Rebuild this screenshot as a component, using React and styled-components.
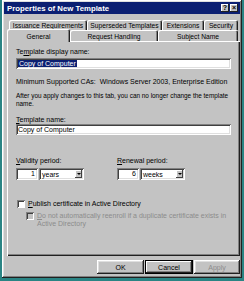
import React from 'react'
import styled, { createGlobalStyle } from 'styled-components'

const GlobalStyle = createGlobalStyle`
  html, body { margin: 0; padding: 0; background: #2a8484; }
  body {
    font-family: "Liberation Sans", Arial, sans-serif;
    font-size: 7px;
    color: #000;
  }
`

const raised = `
  box-shadow: inset -1px -1px #202020, inset 1px 1px #fff, inset -2px -2px #808080, inset 2px 2px #dfdfdf;
`
const sunken = `
  box-shadow: inset 1px 1px #808080, inset -1px -1px #fff, inset 2px 2px #404040, inset -2px -2px #dfdfdf;
`

const Desktop = styled.div`
  width: 244px;
  height: 281px;
  padding: 0 2px 3px 2px;
  box-sizing: border-box;
  overflow: hidden;
`

const Window = styled.div`
  width: 240px;
  height: 278px;
  box-sizing: border-box;
  background: #c3c3c3;
  padding: 2px;
  ${raised}
  display: flex;
  flex-direction: column;
`

const TitleBar = styled.div`
  height: 12px;
  background: #0b1f72;
  display: flex;
  align-items: center;
  justify-content: space-between;
  padding: 0 2px 0 3px;
`

const TitleText = styled.span`
  color: #fff;
  font-weight: bold;
  font-size: 7.8px;
`

const TitleButtons = styled.div`
  display: flex;
  gap: 1px;
`

const TitleButton = styled.div`
  width: 8px;
  height: 8px;
  background: #c3c3c3;
  box-shadow: inset -1px -1px #202020, inset 1px 1px #fff;
  font-weight: bold;
  font-size: 7px;
  line-height: 8px;
  text-align: center;
`

const Body = styled.div`
  padding: 6px 0 0 3px;
  display: flex;
  flex-direction: column;
`

const TabRow = styled.div`
  display: flex;
  align-items: flex-end;
  height: ${p => p.h}px;
  padding-left: ${p => p.indent}px;
  font-size: 6.7px;
`

const Tab = styled.div`
  width: ${p => p.w}px;
  height: ${p => (p.active ? 13 : p.h)}px;
  margin-bottom: ${p => (p.active ? -1 : 0)}px;
  box-sizing: border-box;
  background: #c3c3c3;
  border-radius: 2px 2px 0 0;
  box-shadow: inset 1px 1px #fff, inset -1px 0 #202020, inset -2px 0 #808080;
  position: relative;
  z-index: ${p => (p.active ? 1 : 0)};
  display: flex;
  align-items: center;
  justify-content: center;
  padding-top: 1px;
  white-space: nowrap;
`

const Panel = styled.div`
  height: 215px;
  box-sizing: border-box;
  box-shadow: inset 1px 1px #fff, inset -1px -1px #202020, inset -2px -2px #808080;
  padding: 7px 8px 0 9px;
  display: flex;
  flex-direction: column;
`

const Label = styled.div`
  line-height: 8px;
  margin-top: ${p => p.top || 0}px;
`

const Note = styled.div`
  line-height: 8px;
  margin-top: 6px;
  font-size: 6.4px;
  white-space: nowrap;
`

const TextBox = styled.div`
  height: 11px;
  margin-top: ${p => p.top || 0}px;
  margin-right: 1px;
  background: #fff;
  ${sunken}
  display: flex;
  align-items: center;
  padding-left: 2px;
  line-height: 7px;
`

const Selected = styled.span`
  background: #0b1f72;
  color: #fff;
  padding: 0 1px;
`

const InfoRow = styled.div`
  display: flex;
  line-height: 8px;
  margin-top: ${p => p.top || 0}px;
  white-space: nowrap;
`

const InfoKey = styled.span`
  margin-right: 4px;
`

const PeriodRow = styled.div`
  display: flex;
  margin-top: 14px;
`

const PeriodGroup = styled.div`
  width: ${p => p.w}px;
  display: flex;
  flex-direction: column;
`

const Controls = styled.div`
  display: flex;
  gap: 1px;
  margin-top: 3px;
`

const NumberBox = styled.div`
  width: 22px;
  height: 12px;
  box-sizing: border-box;
  background: #fff;
  ${sunken}
  text-align: right;
  padding-right: 3px;
  line-height: 12px;
`

const Combo = styled.div`
  width: 45px;
  height: 12px;
  box-sizing: border-box;
  background: #fff;
  ${sunken}
  display: flex;
  align-items: center;
  justify-content: space-between;
  padding: 2px 2px 2px 3px;
`

const DropButton = styled.div`
  width: 7px;
  height: 8px;
  background: #c3c3c3;
  box-shadow: inset -1px -1px #404040, inset 1px 1px #fff;
  display: flex;
  align-items: center;
  justify-content: center;

  &::after {
    content: '';
    border-left: 2px solid transparent;
    border-right: 2px solid transparent;
    border-top: 2px solid #000;
  }
`

const CheckRow = styled.div`
  display: flex;
  align-items: flex-start;
  gap: 3px;
  margin-top: ${p => p.top || 0}px;
  padding-left: ${p => p.indent || 0}px;
`

const CheckBox = styled.div`
  width: 8px;
  height: 8px;
  flex: none;
  box-sizing: border-box;
  background: ${p => (p.disabled ? '#c3c3c3' : '#fff')};
  box-shadow: inset 1px 1px #808080, inset -1px -1px #fff, inset 2px 2px #404040;
`

const CheckText = styled.div`
  line-height: 8px;
  color: ${p => (p.disabled ? '#8c8c8c' : '#000')};
`

const ButtonRow = styled.div`
  display: flex;
  justify-content: flex-end;
  gap: 1px;
  margin-top: 4px;
`

const Button = styled.div`
  width: ${p => p.w}px;
  height: 14px;
  box-sizing: border-box;
  background: #c3c3c3;
  display: flex;
  align-items: center;
  justify-content: center;
  color: ${p => (p.disabled ? '#8c8c8c' : '#000')};
  box-shadow: ${p =>
    p.isDefault
      ? 'inset 0 0 0 1px #000, inset -2px -2px #202020, inset 2px 2px #fff, inset -3px -3px #808080'
      : 'inset -1px -1px #202020, inset 1px 1px #fff, inset -2px -2px #808080, inset 2px 2px #dfdfdf'};
`

const Key = styled.u``

const backTabs = [
  ['Issuance Requirements', 78],
  ['Superseded Templates', 75],
  ['Extensions', 42],
  ['Security', 34],
]

const frontTabs = [
  ['General', 63, true],
  ['Request Handling', 88],
  ['Subject Name', 80],
]

export default function App() {
  return (
    <Desktop>
      <GlobalStyle />
      <Window>
        <TitleBar>
          <TitleText>Properties of New Template</TitleText>
          <TitleButtons>
            <TitleButton>?</TitleButton>
            <TitleButton>×</TitleButton>
          </TitleButtons>
        </TitleBar>
        <Body>
          <TabRow h={10} indent={2}>
            {backTabs.map(([name, w]) => (
              <Tab key={name} w={w} h={10}>{name}</Tab>
            ))}
          </TabRow>
          <TabRow h={11} indent={0}>
            {frontTabs.map(([name, w, active]) => (
              <Tab key={name} w={w} h={11} active={active}>{name}</Tab>
            ))}
          </TabRow>
          <Panel>
            <Label>Te<Key>m</Key>plate display name:</Label>
            <TextBox top={2}><Selected>Copy of Computer</Selected></TextBox>
            <InfoRow top={9}>
              <InfoKey>Minimum Supported CAs:</InfoKey>
              <span>Windows Server 2003, Enterprise Edition</span>
            </InfoRow>
            <Note>
              After you apply changes to this tab, you can no longer change the template
              <br />
              name.
            </Note>
            <Label top={8}><Key>T</Key>emplate name:</Label>
            <TextBox top={0}>Copy of Computer</TextBox>
            <PeriodRow>
              <PeriodGroup w={101}>
                <Label top={8}><Key>V</Key>alidity period:</Label>
                <Controls>
                  <NumberBox>1</NumberBox>
                  <Combo>years<DropButton /></Combo>
                </Controls>
              </PeriodGroup>
              <PeriodGroup w={80}>
                <Label top={8}><Key>R</Key>enewal period:</Label>
                <Controls>
                  <NumberBox>6</NumberBox>
                  <Combo>weeks<DropButton /></Combo>
                </Controls>
              </PeriodGroup>
            </PeriodRow>
            <CheckRow top={20} indent={1}>
              <CheckBox />
              <CheckText><Key>P</Key>ublish certificate in Active Directory</CheckText>
            </CheckRow>
            <CheckRow top={4} indent={10}>
              <CheckBox disabled />
              <CheckText disabled>
                <Key>D</Key>o not automatically reenroll if a duplicate certificate exists in Active Directory
              </CheckText>
            </CheckRow>
          </Panel>
          <ButtonRow>
            <Button w={47}>OK</Button>
            <Button w={48} isDefault>Cancel</Button>
            <Button w={46} disabled>Apply</Button>
          </ButtonRow>
        </Body>
      </Window>
    </Desktop>
  )
}
